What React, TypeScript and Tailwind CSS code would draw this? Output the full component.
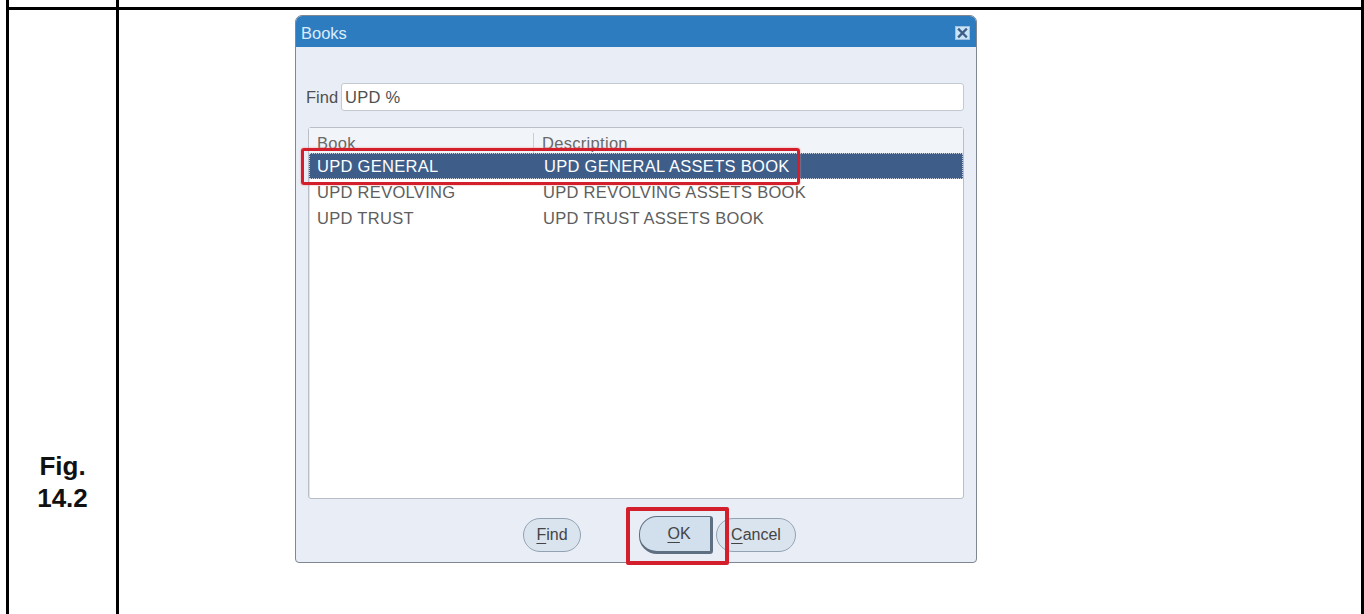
import React from 'react';

type BookRow = { book: string; description: string; selected?: boolean };

const books: BookRow[] = [
  { book: 'UPD GENERAL', description: 'UPD GENERAL ASSETS BOOK', selected: true },
  { book: 'UPD REVOLVING', description: 'UPD REVOLVING ASSETS BOOK' },
  { book: 'UPD TRUST', description: 'UPD TRUST ASSETS BOOK' },
];

// first letter underlined, like a forms accelerator key
const Mnemonic: React.FC<{ label: string }> = ({ label }) => (
  <>
    <span className="underline underline-offset-[3px] decoration-1">{label[0]}</span>
    {label.slice(1)}
  </>
);

const CloseIcon: React.FC = () => (
  <svg width="15" height="14" viewBox="0 0 15 14">
    <rect x="0.5" y="0.5" width="14" height="13" fill="#c9e4f7" stroke="#9cc0dd" />
    <path d="M4 3.5 L11 10.5 M11 3.5 L4 10.5" stroke="#3d5f87" strokeWidth="2.4" strokeLinecap="square" />
  </svg>
);

const BooksDialog: React.FC = () => {
  return (
    <div className="relative w-[682px] h-[548px] flex flex-col bg-[#e9eef6] border border-[#7e8792] rounded-t-[7px] rounded-b-[4px] font-['Liberation_Sans',Arial,sans-serif] text-[16.5px] tracking-[0.3px] text-[#5e5e5e]">
      {/* title bar */}
      <div className="h-[31px] shrink-0 flex items-center justify-between pl-[5px] pr-[6px] pt-[3px] bg-[#2e7cc0] rounded-t-[6px]">
        <span className="text-[#d9edfb] tracking-normal">Books</span>
        <CloseIcon />
      </div>

      {/* find field */}
      <div className="flex items-center mt-[36px] pl-[10px] pr-[12px]">
        <span className="w-[35px] text-[#505050] tracking-normal">Find</span>
        <div className="flex-1 h-[28px] flex items-center pl-[3px] bg-white border border-[#c3c9d1] rounded-[3px] text-[#505050]">
          UPD %
        </div>
      </div>

      {/* list of values */}
      <div className="mt-[16px] ml-[12px] mr-[12px] h-[372px] bg-white border border-[#b8bfc8] rounded-[3px] shadow-[inset_1px_1px_0_#dfe4ea]">
        <div className="h-[25px] flex items-center pt-[5px] bg-[#f1f4f8] text-[#686868]">
          <div className="w-[225px] pl-[8px] border-r border-[#c9cfd7] h-full flex items-center">Book</div>
          <div className="pl-[8px]">Description</div>
        </div>
        {books.map((row) => (
          <div
            key={row.book}
            className={
              row.selected
                ? 'h-[26px] flex items-center bg-[#3e5e89] text-white border border-dotted border-[#c7d0dc]'
                : 'h-[26px] flex items-center'
            }
          >
            <div className={row.selected ? 'w-[225px] pl-[7px]' : 'w-[225px] pl-[8px]'}>{row.book}</div>
            <div className="pl-[9px]">{row.description}</div>
          </div>
        ))}
      </div>

      {/* buttons */}
      <div className="mt-[17px] h-[38px] flex items-center pl-[227px] text-[16px] tracking-normal text-[#444]">
        <button className="w-[58px] h-[34px] rounded-full border border-[#93a2b3] bg-[#dae4ef]">
          <Mnemonic label="Find" />
        </button>
        <button className="ml-[58px] w-[74px] h-[38px] pl-[8px] rounded-l-[18px] rounded-r-[3px] border border-[#5f6f82] border-r-[3px] border-b-[3px] bg-[#d2dfed]">
          <Mnemonic label="OK" />
        </button>
        <button className="ml-[3px] w-[80px] h-[34px] rounded-full border border-[#93a2b3] bg-[#dae4ef]">
          <Mnemonic label="Cancel" />
        </button>
      </div>

      {/* red highlight marks */}
      <div className="absolute left-[5px] top-[132px] w-[499px] h-[37px] border-[3px] border-[#d21f2b] rounded-[3px] shadow-[0_0_2px_#e88]" />
      <div className="absolute left-[330px] top-[491px] w-[103px] h-[58px] border-[4px] border-[#d21f2b] rounded-[2px]" />
    </div>
  );
};

const App: React.FC = () => {
  return (
    <div className="w-[1364px] h-[614px] bg-white overflow-hidden">
      <div className="ml-[6px] w-[1358px] h-full flex flex-col border-x-[3px] border-black">
        <div className="h-[7px] shrink-0 flex">
          <div className="w-[110px] border-r-[3px] border-black" />
        </div>
        <div className="flex-1 flex border-t-[3px] border-black">
          <div className="w-[110px] shrink-0 border-r-[3px] border-black flex flex-col items-center pt-[440px] font-['Liberation_Sans',Arial,sans-serif] font-bold text-[26px] leading-[32px] text-[#111]">
            <span>Fig.</span>
            <span>14.2</span>
          </div>
          <div className="flex-1 pl-[176px] pt-[5px]">
            <BooksDialog />
          </div>
        </div>
      </div>
    </div>
  );
};

export default App;
